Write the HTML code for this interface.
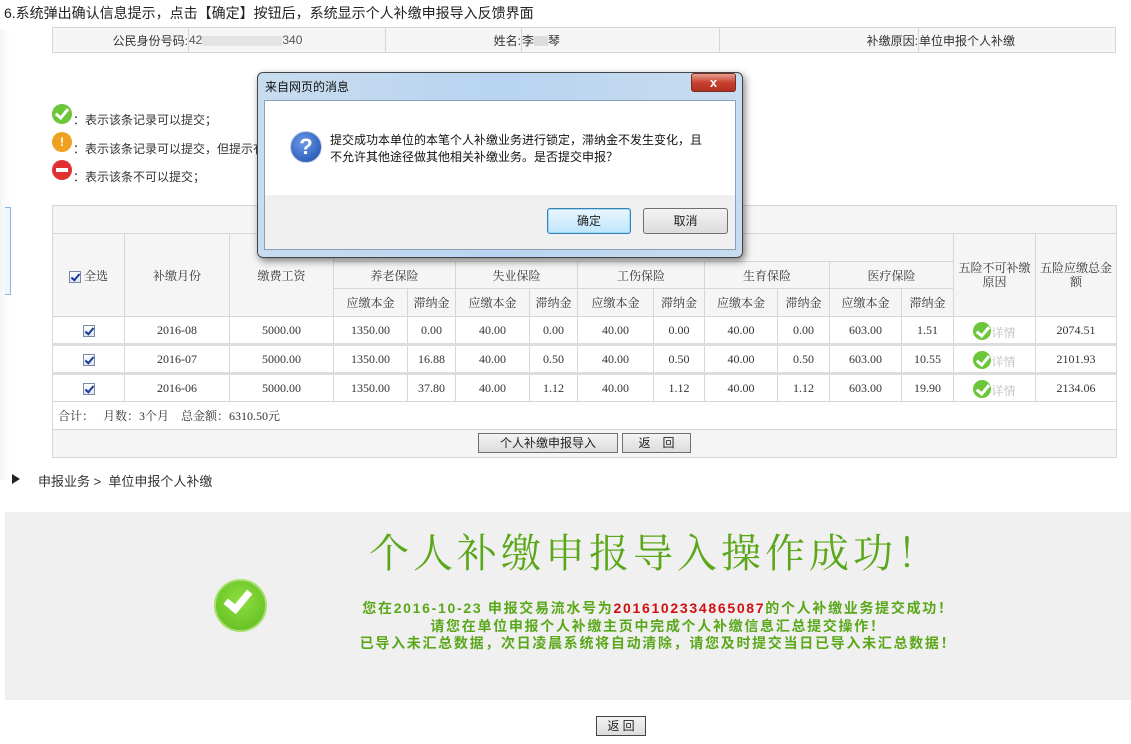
<!DOCTYPE html>
<html><head><meta charset="utf-8"><style>
*{margin:0;padding:0;box-sizing:border-box}
body{width:1131px;height:744px;background:#fff;position:relative;overflow:hidden;font-family:"Liberation Sans","Noto Sans CJK SC",sans-serif;font-size:12px;color:#333}
.a{position:absolute}
table{border-collapse:collapse;table-layout:fixed}
td{border:1px solid #d6d6d6;text-align:center;padding:0;font-size:12px;color:#333}
.num{font-family:"Liberation Serif","Noto Serif CJK SC",serif}
.cb{display:inline-block;width:12px;height:12px;border:1px solid #7a8aa8;background:linear-gradient(#fff,#dde4ee);position:relative;vertical-align:middle}
.cb:after{content:"";position:absolute;left:3px;top:0px;width:3px;height:7px;border:solid #1a3a9a;border-width:0 2px 2px 0;transform:rotate(40deg)}
.ok{display:inline-block;width:18px;height:18px;border-radius:50%;background:#6cc63a;position:relative;vertical-align:middle}
.ok:after{content:"";position:absolute;left:6px;top:2px;width:5px;height:10px;border:solid #fff;border-width:0 3px 3px 0;transform:rotate(40deg)}
.btn{position:absolute;border:1px solid #707070;background:linear-gradient(#f4f4f4,#dcdcdc);font-size:12px;text-align:center;color:#222}
</style></head><body>
<div class="a" style="left:4px;top:3px;font-size:14px;color:#222">6.系统弹出确认信息提示，点击【确定】按钮后，系统显示个人补缴申报导入反馈界面</div>
<div class="a" style="left:0;top:30px;width:10px;height:450px;background:linear-gradient(90deg,#f4f4f4,#fff)"></div>
<div class="a" style="left:5px;top:207px;width:6px;height:88px;border:1px solid #8ab8e0;border-left:none;background:#eef6fd"></div>

<table class="a" style="left:52px;top:27px;width:1064px;background:#f5f5f5">
<tr style="height:25px"><td style="width:136px;text-align:right;border-right:none">公民身份号码:</td><td style="width:197px;text-align:left;color:#555">42<span style="display:inline-block;width:80px;height:10px;background:#e4e4e4;vertical-align:middle"></span>340</td><td style="width:136px;text-align:right;border-right:none">姓名:</td><td style="width:198px;text-align:left">李<span style="display:inline-block;width:14px;height:10px;background:#ddd;vertical-align:middle"></span>琴</td><td style="width:199px;text-align:right;border-right:none">补缴原因:</td><td style="text-align:left">单位申报个人补缴</td></tr></table>

<div class="a" style="left:52px;top:104px"><span class="ok" style="width:20px;height:20px"></span></div>
<div class="a" style="left:73px;top:111px">：表示该条记录可以提交；</div>
<div class="a" style="left:52px;top:132px;width:20px;height:20px;border-radius:50%;background:#f0a020;color:#fff;font-weight:bold;text-align:center;line-height:20px">!</div>
<div class="a" style="left:73px;top:140px">：表示该条记录可以提交，但提示有</div>
<div class="a" style="left:52px;top:160px;width:20px;height:20px;border-radius:50%;background:#e03030"><div style="position:absolute;left:4px;top:8px;width:12px;height:4px;background:#fff"></div></div>
<div class="a" style="left:73px;top:168px">：表示该条不可以提交；</div>

<table class="a num" style="left:52px;top:205px;width:1064px">
<colgroup><col style="width:72px"><col style="width:105px"><col style="width:104px"><col style="width:74px"><col style="width:48px"><col style="width:74px"><col style="width:48px"><col style="width:76px"><col style="width:51px"><col style="width:73px"><col style="width:52px"><col style="width:72px"><col style="width:52px"><col style="width:82px"><col style="width:81px"></colgroup>
<tr style="height:28px;background:#f5f5f5"><td colspan="15"></td></tr>
<tr style="height:28px;background:#f5f5f5"><td rowspan="3"><span class="cb"></span> 全选</td><td rowspan="3">补缴月份</td><td rowspan="3">缴费工资</td><td colspan="10" style="border-bottom:none"></td><td rowspan="3" style="line-height:14px">五险不可补缴<br>原因</td><td rowspan="3" style="line-height:14px">五险应缴总金<br>额</td></tr>
<tr style="height:27px;background:#f5f5f5"><td colspan="2">养老保险</td><td colspan="2">失业保险</td><td colspan="2">工伤保险</td><td colspan="2">生育保险</td><td colspan="2">医疗保险</td></tr>
<tr style="height:28px;background:#f5f5f5"><td>应缴本金</td><td>滞纳金</td><td>应缴本金</td><td>滞纳金</td><td>应缴本金</td><td>滞纳金</td><td>应缴本金</td><td>滞纳金</td><td>应缴本金</td><td>滞纳金</td></tr>
<tr style="height:28px"><td><span class="cb"></span></td><td>2016-08</td><td>5000.00</td><td>1350.00</td><td>0.00</td><td>40.00</td><td>0.00</td><td>40.00</td><td>0.00</td><td>40.00</td><td>0.00</td><td>603.00</td><td>1.51</td><td><span class="ok"></span><span style="color:#bbb;position:relative;top:4px">详情</span></td><td>2074.51</td></tr>
<tr style="height:29px;border-top:3px solid #ddd"><td><span class="cb"></span></td><td>2016-07</td><td>5000.00</td><td>1350.00</td><td>16.88</td><td>40.00</td><td>0.50</td><td>40.00</td><td>0.50</td><td>40.00</td><td>0.50</td><td>603.00</td><td>10.55</td><td><span class="ok"></span><span style="color:#bbb;position:relative;top:4px">详情</span></td><td>2101.93</td></tr>
<tr style="height:28px;border-top:3px solid #ddd"><td><span class="cb"></span></td><td>2016-06</td><td>5000.00</td><td>1350.00</td><td>37.80</td><td>40.00</td><td>1.12</td><td>40.00</td><td>1.12</td><td>40.00</td><td>1.12</td><td>603.00</td><td>19.90</td><td><span class="ok"></span><span style="color:#bbb;position:relative;top:4px">详情</span></td><td>2134.06</td></tr>
<tr style="height:28px"><td colspan="15" style="text-align:left;padding-left:5px">合计：&nbsp;&nbsp;&nbsp;月数：3个月&nbsp;&nbsp;&nbsp;&nbsp;总金额：6310.50元</td></tr>
<tr style="height:28px;background:#f5f5f5"><td colspan="15"></td></tr>
</table>
<div class="btn" style="left:478px;top:433px;width:140px;height:20px;line-height:18px">个人补缴申报导入</div>
<div class="btn" style="left:622px;top:433px;width:69px;height:20px;line-height:18px">返　回</div>

<div class="a" style="left:12px;top:474px;width:0;height:0;border-left:8px solid #222;border-top:5px solid transparent;border-bottom:5px solid transparent"></div>
<div class="a" style="left:38px;top:471px;font-size:13px">申报业务 &gt; &nbsp;单位申报个人补缴</div>

<div class="a" style="left:5px;top:512px;width:1126px;height:188px;background:#f0f0f0"></div>
<div class="a" style="left:300px;top:522px;width:710px;text-align:center;font-size:40px;letter-spacing:4px;color:#5aa81a;font-family:'Noto Serif CJK SC',serif">个人补缴申报导入操作成功！</div>
<div class="a" style="left:214px;top:579px;width:53px;height:53px;border-radius:50%;background:radial-gradient(circle at 50% 40%,#8fe040,#5cb81e);border:2px solid #a8e070"></div>
<div class="a" style="left:230px;top:586px;width:16px;height:26px;border:solid #fff;border-width:0 7px 7px 0;transform:rotate(40deg)"></div>
<div class="a" style="left:300px;top:600px;width:716px;text-align:center;font-size:14px;letter-spacing:1.7px;font-weight:bold;color:#5aa81a;line-height:17.5px">您在2016-10-23 申报交易流水号为<span style="color:#d01010">2016102334865087</span>的个人补缴业务提交成功！<br>请您在单位申报个人补缴主页中完成个人补缴信息汇总提交操作！<br>已导入未汇总数据，次日凌晨系统将自动清除，请您及时提交当日已导入未汇总数据！</div>
<div class="btn" style="left:596px;top:716px;width:50px;height:20px;line-height:18px;border-color:#444">返 回</div>

<!-- dialog -->
<div class="a" style="left:257px;top:72px;width:486px;height:186px;border:1px solid #444;border-radius:6px;background:linear-gradient(90deg,#c8dcef,#b8d4f0 50%,#c8dcef);box-shadow:2px 3px 8px rgba(0,0,0,.5)"></div>
<div class="a" style="left:265px;top:78px;font-size:12px;color:#111">来自网页的消息</div>
<div class="a" style="left:691px;top:73px;width:45px;height:19px;border:1px solid #7a2a20;border-radius:3px;background:linear-gradient(#e8a090,#c84030 50%,#b03020);color:#fff;font-weight:bold;text-align:center;line-height:17px;font-size:13px">x</div>
<div class="a" style="left:264px;top:100px;width:472px;height:150px;border:1px solid #8aa0b8;background:#f0f0f0"></div>
<div class="a" style="left:265px;top:101px;width:470px;height:94px;background:#fff"></div>
<div class="a" style="left:290px;top:131px;width:32px;height:32px;border-radius:50%;background:radial-gradient(circle at 40% 35%,#6a9ae8,#1a4aa8);border:1px solid #c0d0e8;color:#fff;font-weight:bold;font-size:22px;text-align:center;line-height:30px">?</div>
<div class="a" style="left:330px;top:132px;font-size:12px;line-height:17px;color:#111">提交成功本单位的本笔个人补缴业务进行锁定，滞纳金不发生变化，且<br>不允许其他途径做其他相关补缴业务。是否提交申报？</div>
<div class="btn" style="left:547px;top:208px;width:84px;height:26px;line-height:24px;border:1px solid #3c7fb1;border-radius:3px;background:linear-gradient(#eaf6fd,#bee6fd);box-shadow:inset 0 0 0 1px #9cdaf8">确定</div>
<div class="btn" style="left:643px;top:208px;width:85px;height:26px;line-height:24px;border-radius:3px">取消</div>
</body></html>
